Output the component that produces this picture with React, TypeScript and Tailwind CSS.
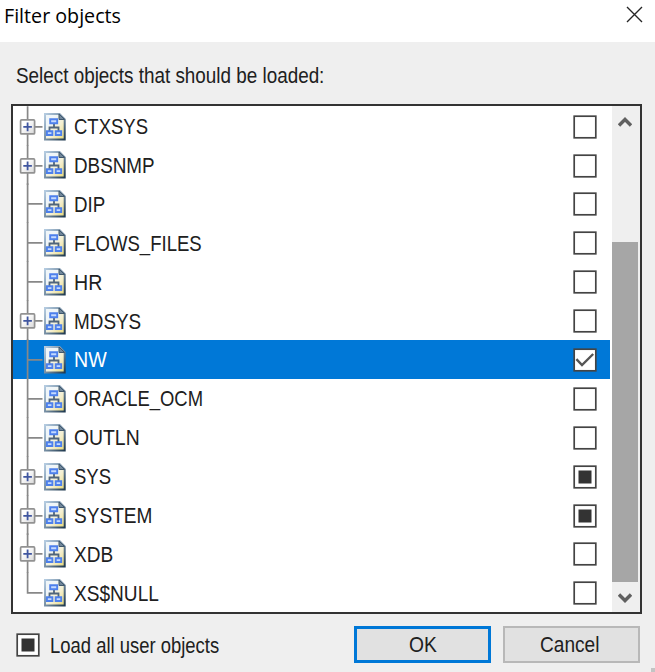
import { useLayoutEffect, useRef, useState } from 'react';

type CheckState = 'empty' | 'checked' | 'partial';

function FitText({ text, width, className = '' }: { text: string; width: number; className?: string }) {
  const ref = useRef<HTMLSpanElement>(null);
  const [scale, setScale] = useState(1);
  useLayoutEffect(() => {
    if (ref.current) setScale(width / ref.current.offsetWidth);
  }, [width]);
  return (
    <span className="block shrink-0 whitespace-nowrap" style={{ width }}>
      <span
        ref={ref}
        className={`inline-block origin-left whitespace-nowrap ${className}`}
        style={{ transform: `scaleX(${scale})` }}
      >
        {text}
      </span>
    </span>
  );
}

function CheckBox({ state }: { state: CheckState }) {
  return (
    <svg className="shrink-0" width="24" height="24" viewBox="0 0 24 24">
      <rect x="1.2" y="1.2" width="21.6" height="21.6" fill="#fff" stroke="#444" strokeWidth="1.7" />
      {state === 'partial' && <rect x="5.5" y="5.5" width="13" height="13" fill="#333" />}
      {state === 'checked' && <path d="M3.4 11.2L9 17L20.2 6" fill="none" stroke="#555" strokeWidth="2.4" />}
    </svg>
  );
}

function SchemaIcon() {
  return (
    <svg className="shrink-0" width="22" height="28" viewBox="0 0 22 28">
      <defs>
        <linearGradient id="paper" x1="0" y1="0" x2="1" y2="1">
          <stop offset="0.3" stopColor="#f0f6f9" />
          <stop offset="0.6" stopColor="#f5f0d2" />
          <stop offset="1" stopColor="#e6d675" />
        </linearGradient>
        <linearGradient id="paperEdge" x1="0" y1="0" x2="1" y2="1">
          <stop offset="0" stopColor="#b4cbe0" />
          <stop offset="0.5" stopColor="#7890a5" />
          <stop offset="1" stopColor="#203a50" />
        </linearGradient>
      </defs>
      <path d="M1 1H15.5L20.7 6.5V26.6H1Z" fill="url(#paper)" stroke="url(#paperEdge)" strokeWidth="2" />
      <path d="M15 1V6.5H20.5Z" fill="#71879b" stroke="#40586d" strokeWidth="1" />
      <path d="M10 10V14.5M5.5 18.5V14.5H14.5V18.5" fill="none" stroke="#50657b" strokeWidth="1.8" />
      <path d="M6.2 6.3H13.2V10.3H6.2ZM2.9 18.3H8.4V22H2.9ZM11.7 18.3H17.2V22H11.7Z" fill="#c4daff" stroke="#4d80ec" strokeWidth="1.9" />
    </svg>
  );
}

function Branch({ expandable, last }: { expandable: boolean; last: boolean }) {
  return (
    <svg className="block h-full shrink-0 overflow-visible" width="30" height="38.9" viewBox="0 0 30 38.9">
      <defs>
        <linearGradient id="expander" x1="0" y1="0" x2="1" y2="1">
          <stop offset="0.3" stopColor="#fff" />
          <stop offset="1" stopColor="#d8d8d8" />
        </linearGradient>
      </defs>
      <path d={last ? 'M14.6 -0.8V19.9H29.5' : 'M14.6 -0.8V38.9M14.6 19.9H29.5'} fill="none" stroke="#888" strokeWidth="1.7" />
      {expandable && (
        <>
          <rect x="7.6" y="12.9" width="14" height="14" rx="1" fill="url(#expander)" stroke="#929292" strokeWidth="1.7" />
          <path d="M10.3 19.9H18.9M14.6 15.6V24.2" stroke="#4056a0" strokeWidth="1.8" />
        </>
      )}
    </svg>
  );
}

interface Schema {
  name: string;
  width: number;
  expandable?: boolean;
  state?: CheckState;
}

const schemas: Schema[] = [
  { name: 'CTXSYS', width: 74, expandable: true },
  { name: 'DBSNMP', width: 80.5, expandable: true },
  { name: 'DIP', width: 31.5 },
  { name: 'FLOWS_FILES', width: 128 },
  { name: 'HR', width: 28.5 },
  { name: 'MDSYS', width: 67, expandable: true },
  { name: 'NW', width: 33, state: 'checked' },
  { name: 'ORACLE_OCM', width: 129 },
  { name: 'OUTLN', width: 66 },
  { name: 'SYS', width: 37, expandable: true, state: 'partial' },
  { name: 'SYSTEM', width: 78, expandable: true, state: 'partial' },
  { name: 'XDB', width: 39, expandable: true },
  { name: 'XS$NULL', width: 85 },
];

function SchemaRow({ schema, last }: { schema: Schema; last: boolean }) {
  const selected = schema.state === 'checked';
  return (
    <div className={`flex h-[38.9px] items-center ${selected ? 'bg-[#0078d7] text-white' : 'text-[#202020]'}`}>
      <Branch expandable={!!schema.expandable} last={last} />
      <div className="ml-[1px] flex items-center pt-[0.8px]">
        <SchemaIcon />
      </div>
      <div className="ml-[7.5px] pt-[2px]">
        <FitText text={schema.name} width={schema.width} className="text-[22px] leading-7" />
      </div>
      <div className="mr-[13px] ml-auto pt-[1px]">
        <CheckBox state={schema.state ?? 'empty'} />
      </div>
    </div>
  );
}

function ScrollArrow({ down = false }: { down?: boolean }) {
  return (
    <svg width="14" height="12" viewBox="0 0 14 12" fill="none" stroke="#606060" strokeWidth="3.4">
      <path d={down ? 'M1 2.5L7 8.5L13 2.5' : 'M1 9.5L7 3.5L13 9.5'} />
    </svg>
  );
}

export default function App() {
  return (
    <div className="flex h-[672px] w-[655px] flex-col overflow-hidden bg-[#efefef] font-['Liberation_Sans',Arial,sans-serif] text-[#202020]">
      <header className="flex h-[42px] shrink-0 justify-between bg-white pr-[12px] pl-[4px]">
        <div className="pt-[2px] text-black">
          <FitText text="Filter objects" width={117} className="font-['Open_Sans','Noto_Sans',sans-serif] text-[20px] leading-7" />
        </div>
        <svg className="mt-[6px]" width="17" height="17" viewBox="0 0 17 17" fill="none" stroke="#252525" strokeWidth="1.35">
          <path d="M1 1L16 16M16 1L1 16" />
        </svg>
      </header>

      <div className="flex h-[62px] shrink-0 pt-[20px] pl-[15.5px]">
        <FitText text="Select objects that should be loaded:" width={308} className="text-[21.5px] leading-7" />
      </div>

      <main className="ml-[11px] flex h-[510px] w-[631px] shrink-0 border-2 border-[#333] bg-white">
        <div className="w-[597px] pt-[0.7px]">
          {schemas.map((schema, i) => (
            <SchemaRow key={schema.name} schema={schema} last={i === schemas.length - 1} />
          ))}
        </div>
        <div className="ml-[2px] flex w-[28px] flex-col bg-[#efefef]">
          <div className="flex h-[136px] justify-center pt-[10px] pr-[2px]">
            <ScrollArrow />
          </div>
          <div className="mr-[2px] h-[340px] bg-[#a6a6a6]" />
          <div className="flex flex-1 justify-center pt-[10px] pr-[2px]">
            <ScrollArrow down />
          </div>
        </div>
      </main>

      <footer className="flex min-h-0 flex-1 pt-[12px] pl-[16px]">
        <div className="flex h-[38px] w-[338px] shrink-0 items-center">
          <CheckBox state="partial" />
          <div className="ml-[9.5px] pt-px">
            <FitText text="Load all user objects" width={169} className="text-[21.5px] leading-7" />
          </div>
        </div>
        <button className="flex h-[37px] w-[137px] shrink-0 items-center justify-center border-[3px] border-[#0078d7] bg-[#e1e1e1]">
          <FitText text="OK" width={28} className="text-[22px] leading-7" />
        </button>
        <button className="ml-[12px] flex h-[37px] w-[137px] shrink-0 items-center justify-center border-2 border-[#b8b8b8] bg-[#e1e1e1] pt-px pr-1">
          <FitText text="Cancel" width={59} className="text-[22px] leading-7" />
        </button>
        <span className="mt-auto ml-auto h-[4px] w-[4px] bg-[#c4c4c4]" />
      </footer>
    </div>
  );
}
